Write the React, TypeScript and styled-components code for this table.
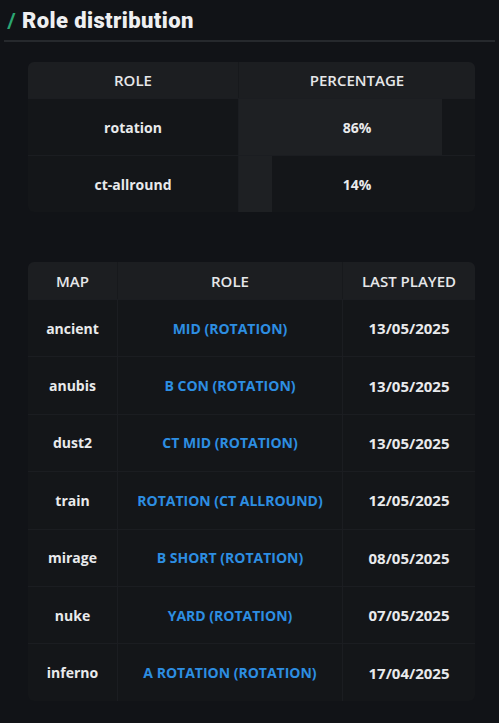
import React from 'react';
import styled, { createGlobalStyle } from 'styled-components';

const GlobalStyle = createGlobalStyle`
  html, body {
    margin: 0;
    padding: 0;
    background: #111317;
  }
  body {
    font-family: 'Open Sans', 'Noto Sans', sans-serif;
    color: #e9eaec;
  }
`;

const Page = styled.div`
  width: 499px;
  min-height: 723px;
  background: #111317;
  padding: 6px 4px 0 4px;
  box-sizing: border-box;
`;

const Heading = styled.h2`
  display: flex;
  align-items: center;
  gap: 6px;
  margin: 0;
  padding: 0 0 6px 3px;
  height: 28px;
  font-family: Roboto, 'Noto Sans', sans-serif;
  font-weight: 900;
  font-size: 22px;
  letter-spacing: 0.4px;
  color: #eeeff1;
  border-bottom: 2px solid #26292d;
`;

const Slash = styled.span`
  color: #2ba673;
  font-family: 'Open Sans', sans-serif;
  font-weight: 600;
  font-size: 22px;
`;

const Body = styled.div`
  display: flex;
  flex-direction: column;
  gap: 50px;
  padding: 20px 20px 0 24px;
`;

const Table = styled.table`
  width: 447px;
  table-layout: fixed;
  border-collapse: separate;
  border-spacing: 0;
  background: #141619;
  border-radius: 6px;
  overflow: hidden;
`;

const HeadCell = styled.th<{ $h: number }>`
  height: ${(p) => p.$h}px;
  padding: 0;
  background: #1c1e21;
  color: #e6e7e9;
  font-weight: 600;
  font-size: 15px;
  text-align: center;
  text-transform: uppercase;
  border-left: 1px solid #17191c;
  &:first-child {
    border-left: none;
  }
`;

const Cell = styled.td<{ $h: number }>`
  height: ${(p) => p.$h}px;
  padding: 0;
  text-align: center;
  font-weight: 700;
  font-size: 14px;
  color: #e9eaec;
  border-top: 1px solid #1b1d21;
  border-left: 1px solid #1b1d21;
  &:first-child {
    border-left: none;
  }
`;

const PercentCell = styled(Cell)<{ $pct: number }>`
  background: linear-gradient(
    to right,
    #1e2023 ${(p) => p.$pct}%,
    transparent ${(p) => p.$pct}%
  );
`;

const RoleText = styled.span`
  color: #2d8ee2;
  font-weight: 700;
  font-size: 14px;
  text-transform: uppercase;
`;

const DateText = styled.span`
  font-size: 15px;
  font-weight: 700;
`;

const distribution = [
  { role: 'rotation', pct: 86 },
  { role: 'ct-allround', pct: 14 },
];

const maps = [
  { map: 'ancient', role: 'Mid (Rotation)', date: '13/05/2025' },
  { map: 'anubis', role: 'B Con (Rotation)', date: '13/05/2025' },
  { map: 'dust2', role: 'CT Mid (Rotation)', date: '13/05/2025' },
  { map: 'train', role: 'Rotation (CT Allround)', date: '12/05/2025' },
  { map: 'mirage', role: 'B Short (Rotation)', date: '08/05/2025' },
  { map: 'nuke', role: 'Yard (Rotation)', date: '07/05/2025' },
  { map: 'inferno', role: 'A Rotation (Rotation)', date: '17/04/2025' },
];

const App: React.FC = () => {
  return (
    <Page>
      <GlobalStyle />
      <Heading>
        <Slash>/</Slash>
        Role distribution
      </Heading>
      <Body>
        <Table>
          <colgroup>
            <col style={{ width: 210 }} />
            <col style={{ width: 237 }} />
          </colgroup>
          <thead>
            <tr>
              <HeadCell $h={36}>Role</HeadCell>
              <HeadCell $h={36}>Percentage</HeadCell>
            </tr>
          </thead>
          <tbody>
            {distribution.map((d) => (
              <tr key={d.role}>
                <Cell $h={56}>{d.role}</Cell>
                <PercentCell $h={56} $pct={d.pct}>
                  {d.pct}%
                </PercentCell>
              </tr>
            ))}
          </tbody>
        </Table>

        <Table>
          <colgroup>
            <col style={{ width: 89 }} />
            <col style={{ width: 225 }} />
            <col style={{ width: 133 }} />
          </colgroup>
          <thead>
            <tr>
              <HeadCell $h={37}>Map</HeadCell>
              <HeadCell $h={37}>Role</HeadCell>
              <HeadCell $h={37}>Last played</HeadCell>
            </tr>
          </thead>
          <tbody>
            {maps.map((m) => (
              <tr key={m.map}>
                <Cell $h={56.4}>{m.map}</Cell>
                <Cell $h={56.4}>
                  <RoleText>{m.role}</RoleText>
                </Cell>
                <Cell $h={56.4}>
                  <DateText>{m.date}</DateText>
                </Cell>
              </tr>
            ))}
          </tbody>
        </Table>
      </Body>
    </Page>
  );
};

export default App;
